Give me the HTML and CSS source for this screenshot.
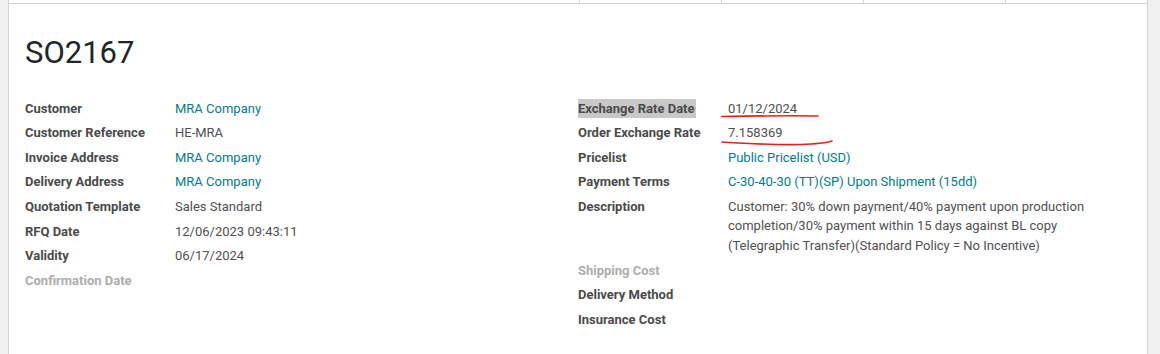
FILE: index.html
```html
<!DOCTYPE html>
<html>
<head>
<meta charset="utf-8">
<link rel="stylesheet" href="styles.css">
</head>
<body>
<div class="page">
  <div class="sheet">
    <div class="buttonbox">
      <div class="statcell"></div>
      <div class="statcell"></div>
      <div class="statcell"></div>
      <div class="statcell"></div>
    </div>
    <div class="content">
      <h1 class="title">SO2167</h1>
      <div class="groups">
        <div class="group">
          <div class="row"><div class="label">Customer</div><div class="value link">MRA Company</div></div>
          <div class="row"><div class="label">Customer Reference</div><div class="value">HE-MRA</div></div>
          <div class="row"><div class="label">Invoice Address</div><div class="value link">MRA Company</div></div>
          <div class="row"><div class="label">Delivery Address</div><div class="value link">MRA Company</div></div>
          <div class="row"><div class="label">Quotation Template</div><div class="value">Sales Standard</div></div>
          <div class="row"><div class="label">RFQ Date</div><div class="value">12/06/2023 09:43:11</div></div>
          <div class="row"><div class="label">Validity</div><div class="value">06/17/2024</div></div>
          <div class="row"><div class="label muted">Confirmation Date</div><div class="value"></div></div>
        </div>
        <div class="group right">
          <div class="row"><div class="label"><span class="selected">Exchange Rate Date</span></div><div class="value">01/12/2024</div></div>
          <div class="row"><div class="label">Order Exchange Rate</div><div class="value">7.158369</div></div>
          <div class="row"><div class="label">Pricelist</div><div class="value link">Public Pricelist (USD)</div></div>
          <div class="row"><div class="label">Payment Terms</div><div class="value link">C-30-40-30 (TT)(SP) Upon Shipment (15dd)</div></div>
          <div class="row"><div class="label">Description</div><div class="value desc">Customer: 30% down payment/40% payment upon production completion/30% payment within 15 days against BL copy (Telegraphic Transfer)(Standard Policy = No Incentive)</div></div>
          <div class="row"><div class="label muted">Shipping Cost</div><div class="value"></div></div>
          <div class="row"><div class="label">Delivery Method</div><div class="value"></div></div>
          <div class="row"><div class="label">Insurance Cost</div><div class="value"></div></div>
        </div>
      </div>
    </div>
  </div>
  <svg class="marks" width="1160" height="354" viewBox="0 0 1160 354">
    <path d="M722 116.5 C750 116 790 115.5 818 116" stroke="#e0241b" stroke-width="1.6" fill="none" stroke-linecap="round"/>
    <path d="M722 142 C745 143.5 775 145 800 144.5 C815 144 826 143 832 141" stroke="#e0241b" stroke-width="1.6" fill="none" stroke-linecap="round"/>
  </svg>
</div>
</body>
</html>
```
FILE: styles.css
```css
* { box-sizing: border-box; }
html, body { margin: 0; padding: 0; }
body {
  font-family: Roboto, "Noto Sans", sans-serif;
  font-size: 13px;
  color: #4c4c4c;
  background: #f0f0f0;
}
.page {
  position: relative;
  width: 1160px;
  height: 354px;
  overflow: hidden;
  background: #f0f0f0;
}
.sheet {
  margin-left: 8px;
  width: 1140px;
  height: 354px;
  background: #fff;
  border-left: 1px solid #d4d4d4;
  border-right: 1px solid #d4d4d4;
}
.buttonbox {
  display: flex;
  justify-content: flex-end;
  height: 4px;
  border-bottom: 1px solid #cfcfcf;
}
.statcell {
  width: 142px;
  border-left: 1px solid #d8d8d8;
}
.content {
  padding: 0 16px 0 16px;
}
.title {
  margin: 0;
  padding-top: 29px;
  font-size: 31px;
  font-weight: 400;
  line-height: 40px;
  color: #212529;
  height: 92px;
}
.groups {
  display: flex;
}
.group {
  width: 553px;
}
.group.right {
  width: 540px;
}
.row {
  display: flex;
  padding: 2.55px 0;
  line-height: 19.5px;
}
.label {
  width: 150px;
  flex: none;
  font-weight: 700;
  color: #4a4a4a;
}
.label.muted { color: #adadad; }
.selected {
  display: inline-block;
  background: #c8c8c8;
  line-height: 19px;
  padding-right: 1px;
}
.value {
  flex: 1;
  color: #505050;
}
.value.link { color: #017e84; }
.value.desc { padding-right: 20px; }
.marks {
  position: absolute;
  left: 0;
  top: 0;
  pointer-events: none;
}
```
